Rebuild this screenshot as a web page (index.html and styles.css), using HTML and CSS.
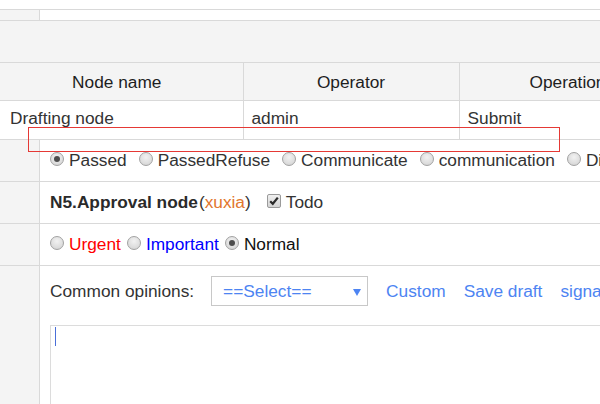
FILE: index.html
```html
<!DOCTYPE html>
<html>
<head>
<meta charset="utf-8">
<link rel="stylesheet" href="styles.css">
</head>
<body>
<div class="page">
  <div class="top-strip"></div>
  <div class="sub-strip"><div class="side"></div><div class="main"></div></div>
  <div class="band"></div>
  <table class="flow">
    <colgroup><col class="c1"><col class="c2"><col class="c3"></colgroup>
    <thead>
      <tr><th class="first">Node name</th><th>Operator</th><th>Operation</th></tr>
    </thead>
    <tbody>
      <tr><td class="first">Drafting node</td><td>admin</td><td>Submit</td></tr>
    </tbody>
  </table>
  <div class="form">
    <div class="frow">
      <div class="side"></div>
      <div class="cell">
        <span class="radio checked"></span><span class="lbl gap">Passed</span>
        <span class="radio"></span><span class="lbl gap">PassedRefuse</span>
        <span class="radio"></span><span class="lbl gap">Communicate</span>
        <span class="radio"></span><span class="lbl gap">communication</span>
        <span class="radio"></span><span class="lbl">Disagree</span>
      </div>
    </div>
    <div class="frow">
      <div class="side"></div>
      <div class="cell">
        <span class="node-title">N5.Approval node</span><span class="paren">(<span class="user">xuxia</span>)</span>
        <span class="checkbox"><svg width="12" height="12" viewBox="0 0 12 12"><polyline points="2.2,6.2 4.8,8.8 9.8,2.6" fill="none" stroke="#2b2b2b" stroke-width="2.2"/></svg></span><span class="lbl">Todo</span>
      </div>
    </div>
    <div class="frow">
      <div class="side"></div>
      <div class="cell">
        <span class="radio"></span><span class="lbl small-gap urgent">Urgent</span>
        <span class="radio"></span><span class="lbl small-gap important">Important</span>
        <span class="radio checked"></span><span class="lbl normal">Normal</span>
      </div>
    </div>
    <div class="frow last">
      <div class="side"></div>
      <div class="opinions">
        <div class="toolbar">
          <span class="lbl">Common opinions:</span>
          <div class="select"><span>==Select==</span><span class="arrow"></span></div>
          <a class="link">Custom</a>
          <a class="link">Save draft</a>
          <a class="link">signature</a>
        </div>
        <div class="textarea"><span class="caret"></span></div>
      </div>
    </div>
  </div>
  <div class="red-box"></div>
</div>
</body>
</html>
```
FILE: styles.css
```css
html, body {
  margin: 0;
  padding: 0;
  overflow: hidden;
  background: #fff;
}
body {
  font-family: "Liberation Sans", Arial, sans-serif;
  font-size: 17.3px;
  line-height: 20px;
  color: #333;
}
.page {
  position: relative;
  width: 700px;
  height: 404px;
  overflow: hidden;
}
.top-strip {
  height: 9px;
  border-bottom: 1px solid #d9d9d9;
}
.sub-strip {
  display: flex;
  height: 10px;
  border-bottom: 1px solid #d9d9d9;
}
.side {
  width: 39px;
  flex: none;
  background: #f4f4f4;
  border-right: 1px solid #d9d9d9;
}
.sub-strip .main { flex: 1; }
.band {
  height: 41px;
  background: #f4f4f4;
  border-bottom: 1px solid #d9d9d9;
}
.flow {
  border-collapse: collapse;
  table-layout: fixed;
  width: 676px;
}
.flow col.c1 { width: 243px; }
.flow col.c2 { width: 216px; }
.flow col.c3 { width: 217px; }
.flow th {
  height: 37px;
  padding: 0;
  background: #f4f4f4;
  font-weight: normal;
  color: #1e1e1e;
  text-align: center;
  vertical-align: middle;
  border-right: 1px solid #d9d9d9;
  border-bottom: 1px solid #d9d9d9;
}
.flow th.first { padding-right: 9px; }
.flow td {
  height: 34px;
  padding: 0 8px 4px;
  text-align: left;
  vertical-align: middle;
  border-right: 1px solid #d9d9d9;
  border-bottom: 1px solid #d9d9d9;
}
.flow td.first { padding-left: 10px; }
.frow {
  display: flex;
  border-bottom: 1px solid #d9d9d9;
}
.frow.last { border-bottom: none; height: 200px; }
.cell {
  flex: 1;
  height: 41px;
  display: flex;
  align-items: center;
  padding-left: 10px;
  padding-bottom: 1px;
  box-sizing: border-box;
  white-space: nowrap;
}
.radio {
  flex: none;
  width: 12px;
  height: 12px;
  border-radius: 50%;
  border: 1px solid #a2a2a2;
  background: radial-gradient(circle at 50% 35%, #f2f2f2 0%, #dedede 60%, #cfcfcf 100%);
  position: relative;
  margin-right: 5px;
  margin-top: -3px;
}
.radio.checked::after {
  content: "";
  position: absolute;
  left: 3px;
  top: 3px;
  width: 6px;
  height: 6px;
  border-radius: 50%;
  background: #4d4d4d;
}
.lbl { flex: none; }
.lbl.gap { margin-right: 12px; }
.lbl.small-gap { margin-right: 6px; }
.urgent { color: #ff0000; }
.important { color: #0000ff; }
.normal { color: #111; }
.node-title { font-weight: bold; color: #2a2a2a; }
.paren { color: #333; margin-right: 16px; margin-left: 1px; }
.user { color: #e2772e; }
.checkbox {
  flex: none;
  width: 12px;
  height: 12px;
  border: 1px solid #9a9a9a;
  border-radius: 2px;
  background: linear-gradient(#f0f0f0, #d4d4d4);
  display: flex;
  align-items: center;
  justify-content: center;
  margin-right: 5px;
  margin-top: -3px;
}
.checkbox svg { display: block; }
.opinions {
  flex: 1;
  padding: 10px 0 0 10px;
}
.toolbar {
  display: flex;
  align-items: center;
  white-space: nowrap;
  height: 30px;
}
.select {
  flex: none;
  box-sizing: border-box;
  width: 157px;
  height: 30px;
  margin-left: 17px;
  border: 1px solid #c8c8c8;
  display: flex;
  align-items: center;
  justify-content: space-between;
  padding: 0 6px 0 11px;
  color: #4d84f2;
}
.arrow {
  width: 0;
  height: 0;
  border-left: 4px solid transparent;
  border-right: 4px solid transparent;
  border-top: 7px solid #4d84f2;
  margin-top: 2px;
}
.link {
  color: #4d84f2;
  margin-left: 18px;
  text-decoration: none;
}
.textarea {
  margin-top: 19px;
  height: 120px;
  border: 1px solid #dcdcdc;
  border-right: none;
  padding: 1px 4px;
}
.caret {
  display: block;
  width: 1px;
  height: 19px;
  background: #4a6fd8;
}
.red-box {
  position: absolute;
  left: 28px;
  top: 127px;
  width: 530px;
  height: 23px;
  border: 1px solid #e53935;
}
```
